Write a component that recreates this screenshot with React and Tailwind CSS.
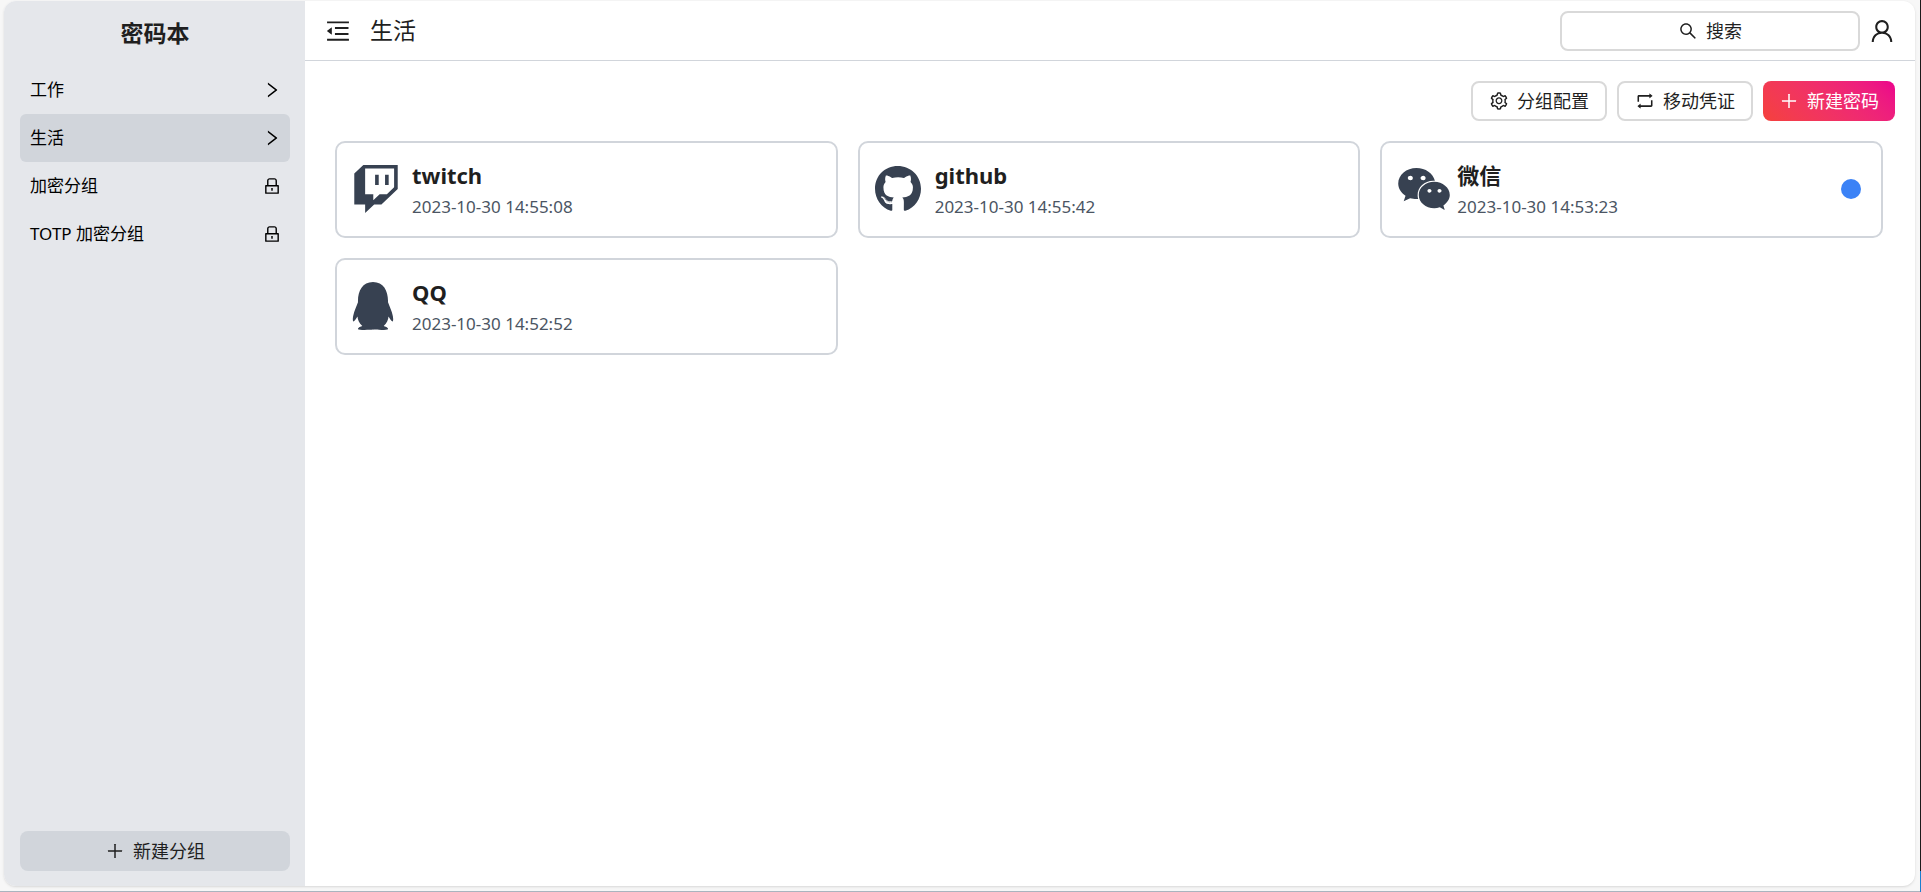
import {
  AiOutlineLock,
  AiOutlineMenuFold,
  AiOutlinePlus,
  AiOutlineRetweet,
  AiOutlineRight,
  AiOutlineSearch,
  AiOutlineSetting,
  AiOutlineUser,
} from 'react-icons/ai';
import { FaGithub, FaQq, FaTwitch, FaWeixin } from 'react-icons/fa';

const GROUPS = [
  { id: 1, name: '工作' },
  { id: 2, name: '生活' },
  { id: 3, name: '加密分组', locked: true },
  { id: 4, name: 'TOTP 加密分组', locked: true },
];

// brand glyphs differ in aspect ratio, so each one carries its own width
const CERTIFICATES = [
  { id: 1, name: 'twitch', time: '2023-10-30 14:55:08', icon: FaTwitch, size: 'w-12' },
  { id: 2, name: 'github', time: '2023-10-30 14:55:42', icon: FaGithub, size: 'w-[46px]' },
  { id: 3, name: '微信', time: '2023-10-30 14:53:23', icon: FaWeixin, size: 'w-[54px]', mark: true },
  { id: 4, name: 'QQ', time: '2023-10-30 14:52:52', icon: FaQq, size: 'w-[42px]' },
];

function GroupItem({ group, active }) {
  const Icon = group.locked ? AiOutlineLock : AiOutlineRight;
  return (
    <a
      href="#"
      className={[
        'flex h-12 items-center justify-between rounded-md pr-2 pl-2.5 text-[17px] text-black',
        active ? 'bg-[#d1d5db]' : 'hover:bg-[#d1d5db]',
      ].join(' ')}
    >
      {group.name}
      <Icon className="h-5 w-5" />
    </a>
  );
}

function Sidebar({ activeId }) {
  return (
    <aside className="flex w-[301px] shrink-0 flex-col bg-[#e5e7eb] pr-[15px] pb-[15px] pl-4">
      <h1 className="py-4 text-center text-[23px] leading-[33px] font-bold">密码本</h1>
      <nav className="flex-1">
        {GROUPS.map((g) => (
          <GroupItem key={g.id} group={g} active={g.id === activeId} />
        ))}
      </nav>
      <button className="flex h-10 items-center justify-center gap-2 rounded-lg bg-[#d1d5db] text-lg">
        <AiOutlinePlus className="h-5 w-5" />
        新建分组
      </button>
    </aside>
  );
}

function ToolButton({ icon: Icon, primary, children }) {
  return (
    <button
      className={[
        'flex h-10 items-center gap-2 rounded-lg px-4 text-lg',
        primary ? 'bg-linear-45 from-[#f5413b] to-[#ec008c] text-white' : 'border-2 border-[#d9d9d9] bg-white',
      ].join(' ')}
    >
      <Icon className="h-5 w-5" />
      {children}
    </button>
  );
}

function CertificateCard({ item }) {
  const Icon = item.icon;
  return (
    <a
      href="#"
      className="flex h-[97px] items-center rounded-[10px] border-2 border-[#d1d5db] bg-white px-[15px] pb-0.5"
    >
      <span className="w-15 shrink-0">
        <Icon className={`h-12 text-[#374151] ${item.size}`} />
      </span>
      <div className="min-w-0 flex-1 pt-1">
        <h3 className="text-[22px] leading-8 font-bold">{item.name}</h3>
        <p className="text-[17px] leading-8 text-[#4b5563]">{item.time}</p>
      </div>
      {item.mark && <span className="mr-[5px] h-5 w-5 rounded-full bg-[#3b82f6]" />}
    </a>
  );
}

export default function App() {
  return (
    <div className="flex h-screen bg-[#f7f7f7] font-['Noto_Sans','Noto_Sans_CJK_SC',sans-serif] text-[#1f1f1f]">
      <div className="flex min-w-0 flex-1 flex-col border-b border-[#aab4be] pt-px pr-[5px] pb-[5px] pl-1">
        <div className="flex min-h-0 flex-1 overflow-hidden rounded-xl bg-white shadow">
          <Sidebar activeId={2} />
          <main className="flex min-w-0 flex-1 flex-col">
            <header className="flex h-15 items-center border-b border-[#d1d5db] pr-[19px] pl-[19px]">
              <button aria-label="收起侧边栏">
                <AiOutlineMenuFold className="h-7 w-7" />
              </button>
              <h2 className="ml-[18px] flex-1 text-[23px]">生活</h2>
              <button className="flex h-10 w-[300px] items-center justify-center gap-2 rounded-lg border-2 border-[#d9d9d9] text-lg">
                <AiOutlineSearch className="h-5 w-5" />
                搜索
              </button>
              <button aria-label="用户" className="ml-2">
                <AiOutlineUser className="h-7 w-7" />
              </button>
            </header>
            <div className="flex justify-end gap-2.5 px-5 pt-5">
              <ToolButton icon={AiOutlineSetting}>分组配置</ToolButton>
              <ToolButton icon={AiOutlineRetweet}>移动凭证</ToolButton>
              <ToolButton icon={AiOutlinePlus} primary>
                新建密码
              </ToolButton>
            </div>
            <div className="grid grid-cols-3 gap-5 py-5 pr-8 pl-[30px]">
              {CERTIFICATES.map((c) => (
                <CertificateCard key={c.id} item={c} />
              ))}
            </div>
          </main>
        </div>
      </div>
      <div className="flex w-px flex-col bg-[#1b1b1b]">
        <div className="mt-auto h-[21px] bg-[#1a7fd0]" />
      </div>
    </div>
  );
}
